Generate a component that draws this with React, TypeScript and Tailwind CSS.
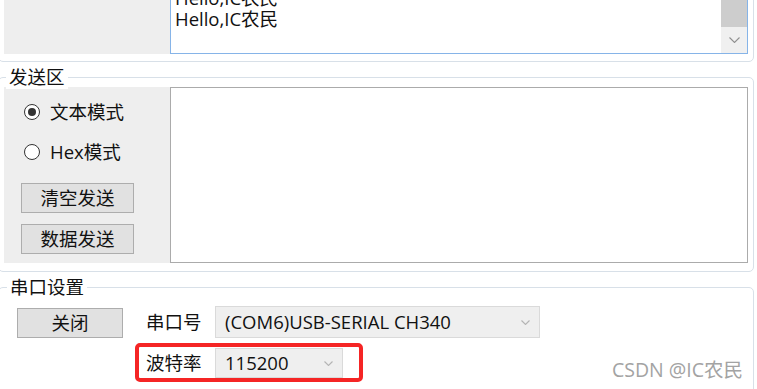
import React from "react";

function Chevron({ className, w = 9, h = 5 }: { className?: string; w?: number; h?: number }) {
  return (
    <svg width={w} height={h} viewBox={`0 0 ${w} ${h}`} className={className}>
      <path d={`M0.5 0.5 L${w / 2} ${h - 0.5} L${w - 0.5} 0.5`} fill="none" stroke="currentColor" strokeWidth="1.1" />
    </svg>
  );
}

function Radio({ checked, label }: { checked?: boolean; label: string }) {
  return (
    <div className="flex h-[24px] items-center">
      <div className="ml-[3px] flex h-[16px] w-[16px] items-center justify-center rounded-full border border-[#333333] bg-white">
        {checked && <div className="h-[8px] w-[8px] rounded-full bg-[#333333]" />}
      </div>
      <span className="ml-[10px] leading-[24px]">{label}</span>
    </div>
  );
}

function Btn({ label, w }: { label: string; w: string }) {
  return (
    <div className={`${w} flex h-[30px] items-center justify-center border border-[#adadad] bg-[#e1e1e1] leading-[24px]`}>
      {label}
    </div>
  );
}

export default function App() {
  const lines = ["Hello,IC农民", "Hello,IC农民"];
  return (
    <div className="relative h-[389px] w-[757px] overflow-hidden bg-white font-['Open_Sans','Noto_Sans_CJK_SC',sans-serif] text-[18.5px] text-[#111111]">
      <div className="-ml-[2px] flex w-[756px] flex-col">
        {/* 接收区 (cut at top) */}
        <div className="-mt-[40px] rounded-[5px] border border-[#d8e0e8] px-[5px] pb-[7px] pt-[5px]">
          <div className="flex h-[88px]">
            <div className="w-[166px] bg-[#eeeeee]" />
            <div className="flex flex-1 border border-[#86b4e8] bg-white">
              <div className="flex flex-1 flex-col justify-end overflow-hidden pb-[24px] pl-[4px] leading-[21px]">
                {lines.map((l, i) => (
                  <div key={i}>{l}</div>
                ))}
              </div>
              <div className="flex w-[26px] flex-col">
                <div className="flex-1 bg-[#cdcdcd]" />
                <div className="flex h-[26px] items-center justify-center bg-[#f0f0f0] text-[#909090]">
                  <Chevron w={11} h={6} />
                </div>
              </div>
            </div>
          </div>
        </div>

        {/* 发送区 */}
        <div className="relative mt-[15px] rounded-[5px] border border-[#d8e0e8] px-[5px] pb-[8px] pt-[9px]">
          <span className="absolute -top-[13px] left-[7px] bg-white px-[3px] leading-[24px]">发送区</span>
          <div className="flex h-[176px]">
            <div className="flex w-[166px] flex-col bg-[#eeeeee] pl-[17px] pt-[13px]">
              <Radio checked label="文本模式" />
              <div className="mt-[16px]">
                <Radio label="Hex模式" />
              </div>
              <div className="mt-[19px]">
                <Btn label="清空发送" w="w-[113px]" />
              </div>
              <div className="mt-[11px]">
                <Btn label="数据发送" w="w-[113px]" />
              </div>
            </div>
            <div className="flex-1 border border-[#ababab] bg-white" />
          </div>
        </div>

        {/* 串口设置 */}
        <div className="relative mt-[15px] h-[120px] rounded-[5px] border border-[#d8e0e8] pl-[18px] pt-[18px]">
          <span className="absolute -top-[13px] left-[8px] bg-white px-[3px] leading-[24px]">串口设置</span>
          <div className="flex">
            <div className="mt-[2px]">
              <Btn label="关闭" w="w-[106px]" />
            </div>
            <div className="ml-[12px] flex flex-col">
              <div className="flex items-center pl-[11px]">
                <span className="w-[69px] leading-[24px]">串口号</span>
                <div className="flex h-[32px] w-[325px] items-center justify-between border border-[#dadada] bg-[#efefef] pl-[9px] pr-[9px]">
                  <span className="leading-[24px]">(COM6)USB-SERIAL CH340</span>
                  <Chevron className="text-[#b4b4b4]" />
                </div>
              </div>
              <div className="mt-[5px] flex w-[228px] items-center rounded-[5px] border-[4px] border-[#f52525] pl-[7px] pt-[1px]">
                <span className="w-[69px] leading-[24px]">波特率</span>
                <div className="flex h-[30px] w-[128px] items-center justify-between border border-[#dadada] bg-[#efefef] pl-[9px] pr-[9px]">
                  <span className="leading-[24px]">115200</span>
                  <Chevron className="text-[#b4b4b4]" />
                </div>
              </div>
            </div>
          </div>
        </div>
      </div>
      <div className="absolute left-[612px] top-[356px] text-[19.5px] leading-[28px] text-[#a3a3a3]">CSDN @IC农民</div>
    </div>
  );
}
